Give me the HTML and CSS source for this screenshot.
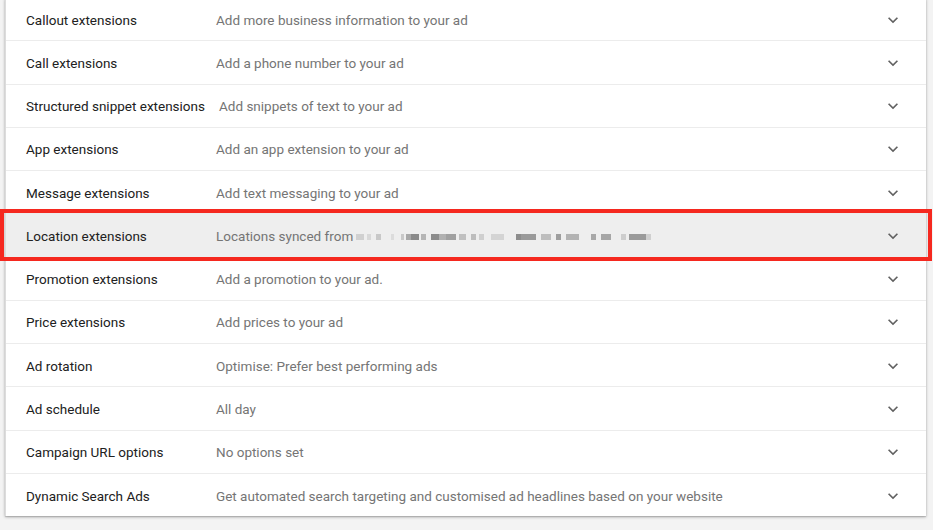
FILE: index.html
```html
<!DOCTYPE html>
<html lang="en">
<head>
<meta charset="utf-8">
<title>Extensions</title>
<link rel="stylesheet" href="styles.css">
</head>
<body>
<div class="page">
  <div class="card">
    <div class="row"><span class="label">Callout extensions</span><span class="desc">Add more business information to your ad</span><svg class="chev" viewBox="0 0 24 24"><path d="M16.59 8.59L12 13.17 7.41 8.59 6 10l6 6 6-6z"/></svg></div>
    <div class="row"><span class="label">Call extensions</span><span class="desc">Add a phone number to your ad</span><svg class="chev" viewBox="0 0 24 24"><path d="M16.59 8.59L12 13.17 7.41 8.59 6 10l6 6 6-6z"/></svg></div>
    <div class="row"><span class="label">Structured snippet extensions</span><span class="desc">Add snippets of text to your ad</span><svg class="chev" viewBox="0 0 24 24"><path d="M16.59 8.59L12 13.17 7.41 8.59 6 10l6 6 6-6z"/></svg></div>
    <div class="row"><span class="label">App extensions</span><span class="desc">Add an app extension to your ad</span><svg class="chev" viewBox="0 0 24 24"><path d="M16.59 8.59L12 13.17 7.41 8.59 6 10l6 6 6-6z"/></svg></div>
    <div class="row"><span class="label">Message extensions</span><span class="desc">Add text messaging to your ad</span><svg class="chev" viewBox="0 0 24 24"><path d="M16.59 8.59L12 13.17 7.41 8.59 6 10l6 6 6-6z"/></svg></div>
    <div class="row highlighted"><span class="label">Location extensions</span><span class="desc">Locations synced from <span class="blur" aria-hidden="true"></span></span><svg class="chev" viewBox="0 0 24 24"><path d="M16.59 8.59L12 13.17 7.41 8.59 6 10l6 6 6-6z"/></svg></div>
    <div class="row"><span class="label">Promotion extensions</span><span class="desc">Add a promotion to your ad.</span><svg class="chev" viewBox="0 0 24 24"><path d="M16.59 8.59L12 13.17 7.41 8.59 6 10l6 6 6-6z"/></svg></div>
    <div class="row"><span class="label">Price extensions</span><span class="desc">Add prices to your ad</span><svg class="chev" viewBox="0 0 24 24"><path d="M16.59 8.59L12 13.17 7.41 8.59 6 10l6 6 6-6z"/></svg></div>
    <div class="row"><span class="label">Ad rotation</span><span class="desc">Optimise: Prefer best performing ads</span><svg class="chev" viewBox="0 0 24 24"><path d="M16.59 8.59L12 13.17 7.41 8.59 6 10l6 6 6-6z"/></svg></div>
    <div class="row"><span class="label">Ad schedule</span><span class="desc">All day</span><svg class="chev" viewBox="0 0 24 24"><path d="M16.59 8.59L12 13.17 7.41 8.59 6 10l6 6 6-6z"/></svg></div>
    <div class="row"><span class="label">Campaign URL options</span><span class="desc">No options set</span><svg class="chev" viewBox="0 0 24 24"><path d="M16.59 8.59L12 13.17 7.41 8.59 6 10l6 6 6-6z"/></svg></div>
    <div class="row"><span class="label">Dynamic Search Ads</span><span class="desc">Get automated search targeting and customised ad headlines based on your website</span><svg class="chev" viewBox="0 0 24 24"><path d="M16.59 8.59L12 13.17 7.41 8.59 6 10l6 6 6-6z"/></svg></div>
  </div>
</div>
</body>
</html>
```
FILE: styles.css
```css
html, body {
  margin: 0;
  padding: 0;
  background: #f3f3f3;
  font-family: Roboto, "Liberation Sans", Arial, sans-serif;
  font-size: 13.5px;
}
.page {
  padding: 0 7px 0 5px;
  height: 530px;
  overflow: hidden;
}
.card {
  margin-top: -2px;
  background: #fff;
  border-left: 1px solid #dcdcdc;
  box-shadow: 0 1px 3px rgba(0,0,0,0.28), 0 1px 1px rgba(0,0,0,0.12);
}
.row {
  position: relative;
  display: flex;
  align-items: center;
  box-sizing: border-box;
  height: 43.25px;
  padding: 1px 23px 0 20px;
  border-bottom: 1px solid #ececec;
}
.row:last-child { border-bottom: none; height: 42.5px; }
.label {
  box-sizing: border-box;
  min-width: 190px;
  padding-right: 14px;
  color: #212121;
  white-space: nowrap;
}
.desc {
  flex: 1;
  color: #757575;
  white-space: nowrap;
  display: flex;
  align-items: center;
}
.chev {
  width: 20px;
  height: 20px;
  fill: #616161;
  flex: none;
}
.highlighted {
  background: #eeeeee;
}
.highlighted::after {
  content: "";
  position: absolute;
  top: -5px;
  bottom: -4px;
  left: -6px;
  right: -6px;
  border: 4px solid #f5281f;
  pointer-events: none;
}
.blur {
  display: inline-block;
  width: 296px;
  height: 6px;
  margin-left: 2px;
  margin-top: 3px;
  background: linear-gradient(to right,
    transparent 0 1px, #d0d0d0 1px 9px, transparent 9px 12px, #d8d8d8 12px 16px,
    transparent 16px 21px, #c8c8c8 21px 26px, transparent 26px 36px, #dcdcdc 36px 39px,
    transparent 39px 46px, #c8c8c8 46px 49px, transparent 49px 51px, #a8a8a8 51px 56px,
    #8a8a8a 56px 64px, transparent 64px 66px, #b5b5b5 66px 71px, transparent 71px 76px,
    #8c8c8c 76px 84px, #b0b0b0 84px 91px, #a0a0a0 91px 101px, transparent 101px 104px,
    #c0c0c0 104px 111px, transparent 111px 116px, #bdbdbd 116px 121px, transparent 121px 124px,
    #cfcfcf 124px 129px, transparent 129px 136px, #d4d4d4 136px 149px, transparent 149px 161px,
    #8d8d8d 161px 166px, #9a9a9a 166px 181px, transparent 181px 186px, #bebebe 186px 196px,
    transparent 196px 201px, #9e9e9e 201px 206px, transparent 206px 211px, #b3b3b3 211px 224px,
    transparent 224px 236px, #a8a8a8 236px 241px, transparent 241px 246px, #a6a6a6 246px 256px,
    transparent 256px 266px, #cdcdcd 266px 271px, transparent 271px 274px, #9a9a9a 274px 291px,
    #cfcfcf 291px 296px);
}
```
